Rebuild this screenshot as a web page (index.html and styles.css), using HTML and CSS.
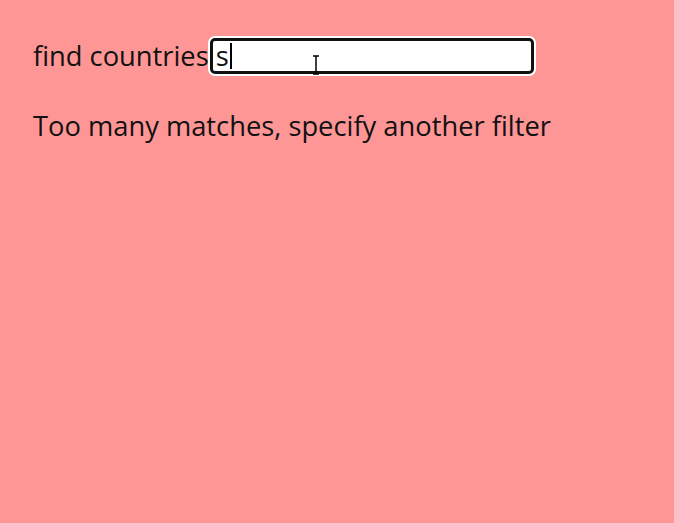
FILE: index.html
```html
<!DOCTYPE html>
<html>
<head>
<meta charset="utf-8">
<link rel="stylesheet" href="styles.css">
</head>
<body>
<div class="app">
  <div class="search">
    <label class="label" for="q">find countries</label><span class="field"><span class="value">s</span><span class="caret"></span><span class="cursor"><svg width="8" height="20" viewBox="0 0 8 20"><path d="M1 1h6M1 19h6M4 1v18" stroke="#000" stroke-width="1.5" fill="none"/></svg></span></span>
  </div>
  <p class="message">Too many matches, specify another filter</p>
</div>
</body>
</html>
```
FILE: styles.css
```css
html, body {
  margin: 0;
  padding: 0;
  background: #ff9696;
  height: 100%;
}
.app {
  padding: 33px 0 0 33px;
  font-family: "Open Sans", "Noto Sans", sans-serif;
  font-size: 27.3px;
  color: #111;
}
.search {
  display: flex;
  align-items: center;
  height: 46px;
}
.label {
  line-height: 1;
}
.field {
  position: relative;
  display: flex;
  align-items: center;
  box-sizing: border-box;
  width: 324px;
  height: 36px;
  margin-left: 1px;
  background: #fff;
  border: 3px solid #111;
  border-radius: 5px;
  box-shadow: 0 0 0 2px #fff;
  padding-left: 3px;
}
.value {
  line-height: 1;
}
.caret {
  display: inline-block;
  width: 2px;
  height: 26px;
  background: #000;
  margin-left: 1px;
}
.cursor {
  position: absolute;
  left: 99px;
  top: 14px;
  display: block;
  line-height: 0;
}
.message {
  margin: 33px 0 0 0;
  line-height: 1;
}
```
